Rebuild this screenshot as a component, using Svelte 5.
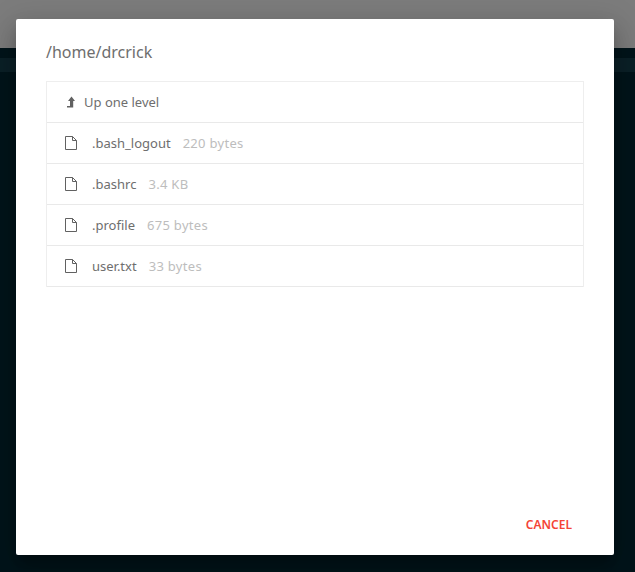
<script>
  const files = [
    { name: '.bash_logout', size: '220 bytes' },
    { name: '.bashrc', size: '3.4 KB' },
    { name: '.profile', size: '675 bytes' },
    { name: 'user.txt', size: '33 bytes' }
  ];
</script>

<div class="page">
  <div class="topbar"></div>
  <div class="content">
    <div class="gap"></div>
    <div class="strip"></div>
  </div>
  <div class="modal">
    <div class="body">
      <h4 class="path">/home/drcrick</h4>
      <ul class="list">
        <li class="row up">
          <svg class="up-icon" width="10" height="12" viewBox="0 0 10 12"><path d="M5.5 0.5 L9 5 H7.2 V11.5 H1 V10 H4 V5 H2 Z" fill="#616161"/></svg>
          <span class="name">Up one level</span>
        </li>
        {#each files as f}
          <li class="row">
            <svg class="file-icon" width="14" height="16" viewBox="0 0 14 16"><path d="M1.5 1.5 H8.5 L12.5 5.5 V14.5 H1.5 Z M8.5 1.5 V5.5 H12.5" fill="none" stroke="#616161" stroke-width="1"/></svg>
            <span class="name">{f.name}</span>
            <span class="size">{f.size}</span>
          </li>
        {/each}
      </ul>
    </div>
    <div class="footer"><button class="cancel">CANCEL</button></div>
  </div>
</div>

<style>
  :global(body) { margin: 0; background: #02141a; }
  .page {
    position: relative;
    width: 635px;
    height: 572px;
    overflow: hidden;
    display: flex;
    flex-direction: column;
    font-family: "Noto Sans", "Open Sans", sans-serif;
    font-size: 13px;
    color: #6e6e6e;
  }
  .topbar { height: 48px; background: #7c7c7c; flex: none; }
  .content { flex: 1; background: #02141a; }
  .gap { height: 10px; }
  .strip { height: 14px; background: #0b2027; }
  .modal {
    position: absolute;
    left: 16px;
    top: 19px;
    width: 598px;
    height: 536px;
    background: #fff;
    border-radius: 2px;
    box-shadow: 0 16px 24px 2px rgba(0,0,0,.14), 0 6px 30px 5px rgba(0,0,0,.12), 0 8px 10px -5px rgba(0,0,0,.3);
    display: flex;
    flex-direction: column;
  }
  .body { flex: 1; padding: 22px 30px 0; }
  .path { margin: 0 0 18px; font-size: 16px; font-weight: 400; line-height: 22px; color: #6e6e6e; }
  .list { list-style: none; margin: 0; padding: 0; border: 1px solid #eee; border-bottom: 0; }
  .row {
    height: 40px;
    border-bottom: 1px solid #e9e9e9;
    display: flex;
    align-items: center;
    padding-left: 17px;
  }
  .up-icon { margin-left: 2px; margin-right: 8px; }
  .file-icon { margin-right: 14px; }
  .size { color: #bdbdbd; margin-left: 12px; letter-spacing: .3px; }
  .footer { height: 60px; padding-top: 2px; display: flex; justify-content: flex-end; align-items: center; padding-right: 42px; }
  .cancel {
    border: 0;
    background: none;
    padding: 0;
    font-family: inherit;
    font-size: 12px;
    font-weight: 600;
    line-height: 16px;
    color: #f44336;
  }
</style>
